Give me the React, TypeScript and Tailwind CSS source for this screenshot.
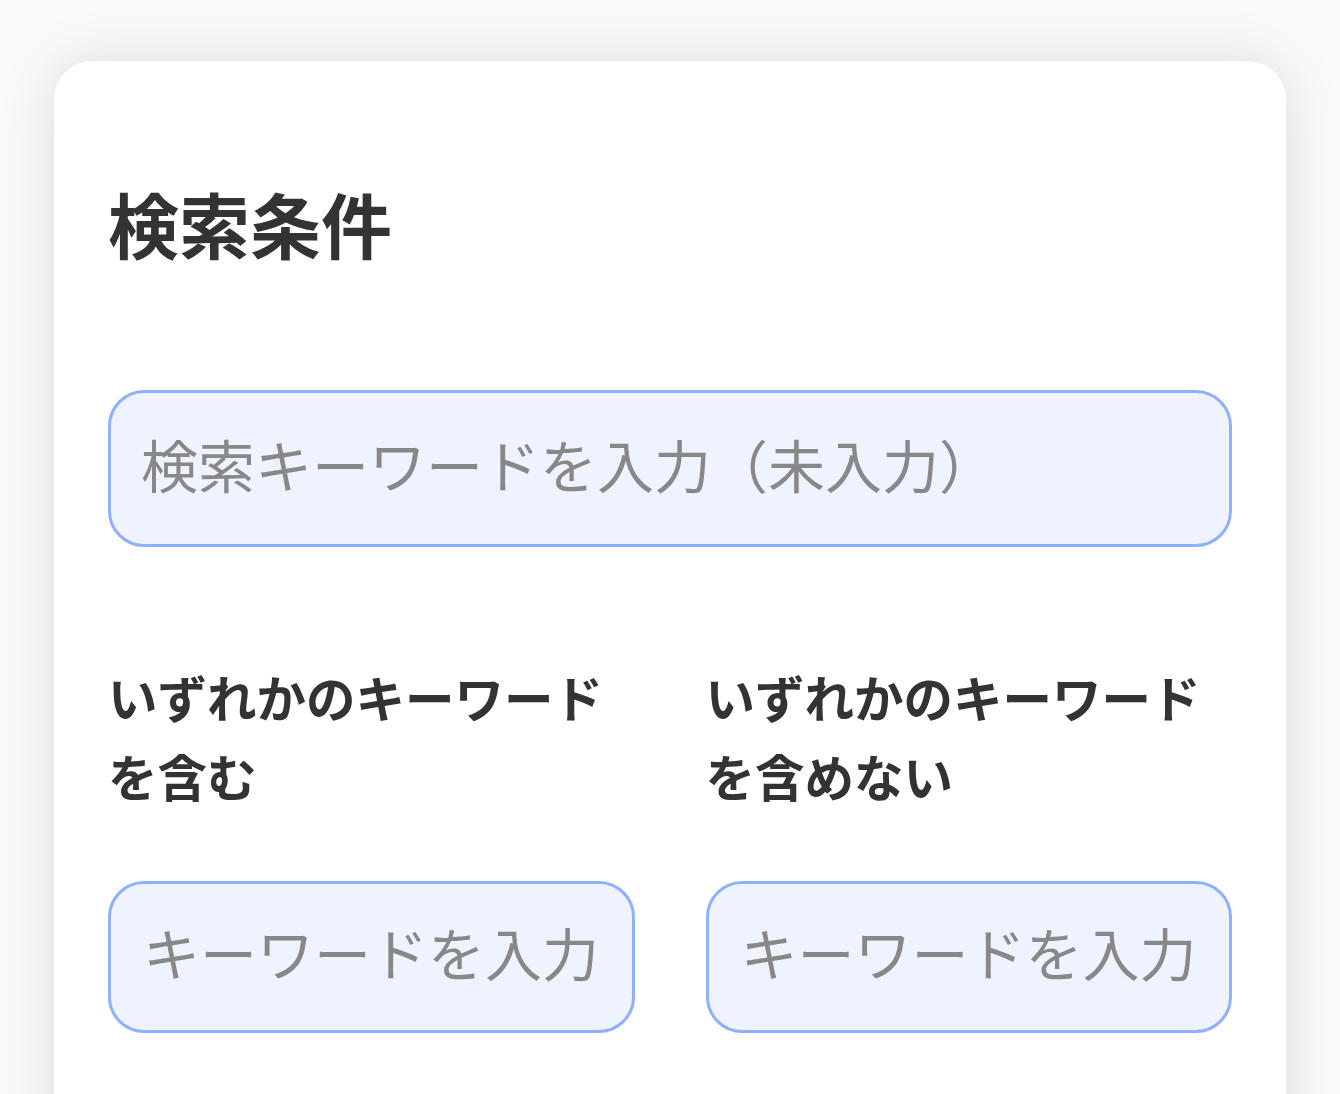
export default function App() {
  const font = { fontFamily: '"Noto Sans CJK JP", "Noto Sans", sans-serif' };

  return (
    <div className="h-[1094px] bg-[#fafafa] pt-[61px] px-[54px] overflow-hidden" style={font}>
      <div className="bg-white rounded-[38px] shadow-[0_0_60px_rgba(0,0,0,0.12)] px-[54px] pt-[126px] pb-[200px]">
        <h1 className="text-[71px] leading-[71px] font-bold text-[#333333]">検索条件</h1>

        <input
          type="text"
          placeholder="検索キーワードを入力（未入力）"
          className="mt-[132px] block w-full h-[157px] rounded-[36px] border-[3px] border-[#8fb0fa] bg-[#eef3ff] px-[30px] pb-[12px] text-[57px] text-[#333333] placeholder:text-[#888888] outline-none"
        />

        <div className="mt-[110px] grid grid-cols-2 gap-x-[71px]">
          <div className="flex flex-col">
            <label className="text-[49.5px] leading-[79px] font-bold text-[#333333]">
              いずれかのキーワードを含む
            </label>
            <input
              type="text"
              placeholder="キーワードを入力"
              className="mt-[66px] block w-full h-[152px] rounded-[36px] border-[3px] border-[#8fb0fa] bg-[#eef3ff] px-[32px] pb-[12px] text-[57px] text-[#333333] placeholder:text-[#888888] outline-none"
            />
          </div>
          <div className="flex flex-col">
            <label className="text-[49.5px] leading-[79px] font-bold text-[#333333]">
              いずれかのキーワードを含めない
            </label>
            <input
              type="text"
              placeholder="キーワードを入力"
              className="mt-[66px] block w-full h-[152px] rounded-[36px] border-[3px] border-[#8fb0fa] bg-[#eef3ff] px-[32px] pb-[12px] text-[57px] text-[#333333] placeholder:text-[#888888] outline-none"
            />
          </div>
        </div>
      </div>
    </div>
  );
}
